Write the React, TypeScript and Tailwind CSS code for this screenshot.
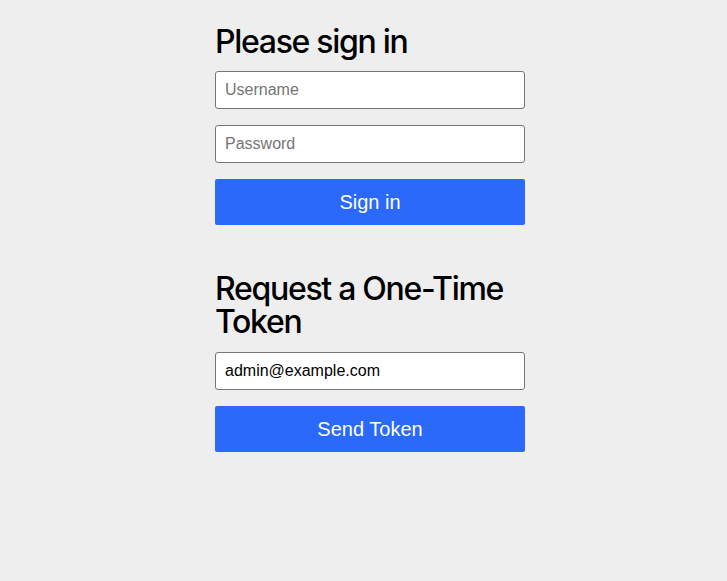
import React, { useState } from "react";

const inputClass =
  "block w-full h-[38px] px-[9px] bg-white border border-[#767676] rounded-[3px] text-[16px] text-black placeholder:text-[#757575] outline-none";

const buttonClass =
  "block w-full h-[46px] bg-[#2a69fa] text-white text-[20px] rounded-[2px]";

const headingClass =
  "font-['Inter',sans-serif] font-medium text-[32px] leading-[33px] tracking-[-1.3px] text-black";

export default function App() {
  const [username, setUsername] = useState("");
  const [password, setPassword] = useState("");
  const [email, setEmail] = useState("admin@example.com");

  return (
    <div className="min-h-screen bg-[#eeeeee] font-['Liberation_Sans',Arial,sans-serif] flex justify-center pl-[13px] pt-[25px]">
      <div className="w-[310px]">
        {/* Login form */}
        <form onSubmit={(e) => e.preventDefault()}>
          <h2 className={headingClass + " mb-[13px]"}>Please sign in</h2>
          <input
            className={inputClass}
            placeholder="Username"
            value={username}
            onChange={(e) => setUsername(e.target.value)}
          />
          <input
            type="password"
            className={inputClass + " mt-[16px]"}
            placeholder="Password"
            value={password}
            onChange={(e) => setPassword(e.target.value)}
          />
          <button type="submit" className={buttonClass + " mt-[16px]"}>
            Sign in
          </button>
        </form>

        {/* One-time token form */}
        <form onSubmit={(e) => e.preventDefault()} className="mt-[47px]">
          <h2 className={headingClass + " mb-[14px]"}>Request a One-Time Token</h2>
          <input
            className={inputClass}
            value={email}
            onChange={(e) => setEmail(e.target.value)}
          />
          <button type="submit" className={buttonClass + " mt-[16px]"}>
            Send Token
          </button>
        </form>
      </div>
    </div>
  );
}
